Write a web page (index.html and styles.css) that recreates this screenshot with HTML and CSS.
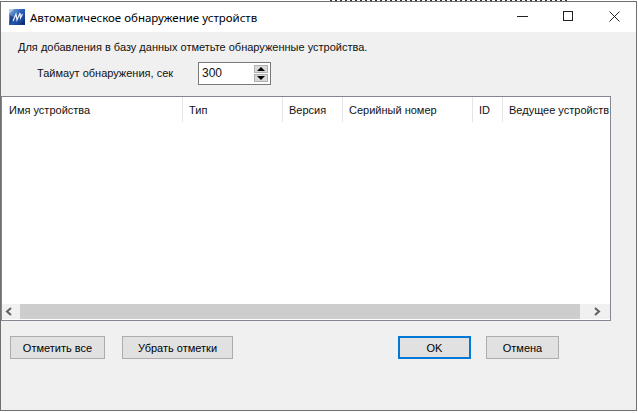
FILE: index.html
```html
<!DOCTYPE html>
<html lang="ru">
<head>
<meta charset="utf-8">
<title>Автоматическое обнаружение устройств</title>
<link rel="stylesheet" href="styles.css">
</head>
<body>
<div class="backdrop"></div>
<div class="window">
  <header class="titlebar">
    <svg class="app-icon" width="16" height="16" viewBox="0 0 16 16">
      <defs>
        <linearGradient id="ig" x1="0" y1="0" x2="1" y2="1">
          <stop offset="0" stop-color="#8fb0dc"/>
          <stop offset="0.45" stop-color="#2a62b8"/>
          <stop offset="1" stop-color="#0f2f80"/>
        </linearGradient>
      </defs>
      <rect width="16" height="16" fill="url(#ig)"/>
      <path d="M1 15 L6 9 L1 6 Z M11 15 L16 10 V15 Z" fill="#0b2468" opacity=".55"/>
      <path d="M4 12 L7 5 L8 11 L11 4 L11.5 9 L13.5 5" fill="none" stroke="#eef2fa" stroke-width="1.2"/>
      <path d="M0 0 H5 L0 5 Z" fill="#dfe8f6" opacity=".6"/>
    </svg>
    <span class="title">Автоматическое обнаружение устройств</span>
    <div class="controls">
      <svg class="ctl" width="11" height="11" viewBox="0 0 11 11"><path d="M0 5.5 H11" stroke="#222" fill="none"/></svg>
      <svg class="ctl" width="11" height="11" viewBox="0 0 11 11"><rect x=".5" y=".5" width="9" height="9" stroke="#222" fill="none"/></svg>
      <svg class="ctl" width="11" height="11" viewBox="0 0 11 11"><path d="M.5 .5 L10.5 10.5 M10.5 .5 L.5 10.5" stroke="#222" fill="none"/></svg>
    </div>
  </header>
  <main class="body">
    <p class="intro">Для добавления в базу данных отметьте обнаруженные устройства.</p>
    <div class="timeout">
      <label class="timeout-label">Таймаут обнаружения, сек</label>
      <div class="spin">
        <span class="spin-value">300</span>
        <div class="spin-btns">
          <span class="spin-btn"><i class="tri-up"></i></span>
          <span class="spin-btn"><i class="tri-down"></i></span>
        </div>
      </div>
    </div>
    <section class="list">
      <div class="head">
        <div class="col c1">Имя устройства</div>
        <div class="col c2">Тип</div>
        <div class="col c3">Версия</div>
        <div class="col c4">Серийный номер</div>
        <div class="col c5">ID</div>
        <div class="col c6">Ведущее устройств</div>
      </div>
      <div class="rows"></div>
      <div class="hscroll">
        <span class="arrow"><svg width="8" height="9" viewBox="0 0 8 9"><path d="M6 1 L2 4.5 L6 8" fill="none" stroke="#606060" stroke-width="2"/></svg></span>
        <span class="thumb"></span>
        <span class="arrow arrow-r"><svg width="8" height="9" viewBox="0 0 8 9"><path d="M2 1 L6 4.5 L2 8" fill="none" stroke="#606060" stroke-width="2"/></svg></span>
      </div>
    </section>
    <div class="actions">
      <button class="btn b-all">Отметить все</button>
      <button class="btn b-clear">Убрать отметки</button>
      <button class="btn btn-default b-ok">OK</button>
      <button class="btn b-cancel">Отмена</button>
    </div>
  </main>
</div>
</body>
</html>
```
FILE: styles.css
```css
* { box-sizing: border-box; }
html, body { margin: 0; padding: 0; background: #fff; }
body {
  width: 638px;
  height: 413px;
  overflow: hidden;
  font-family: "Liberation Sans", Arial, sans-serif;
  font-size: 11px;
  color: #111;
}
.backdrop {
  height: 1px;
  margin-left: 330px;
  width: 240px;
  background: repeating-linear-gradient(90deg, #333 0 2px, #fff 2px 5px);
}
.window {
  width: 637px;
  height: 410px;
  border: 1px solid #707070;
  display: flex;
  flex-direction: column;
  background: #f0f0f0;
}
.titlebar {
  height: 30px;
  flex: none;
  background: #fff;
  display: flex;
  align-items: center;
  padding-left: 8px;
}
.app-icon { flex: none; }
.title {
  margin-left: 5px;
  font-family: "Noto Sans", sans-serif;
  font-size: 11.5px;
  color: #000;
}
.controls {
  margin-left: auto;
  margin-right: 16px;
  display: flex;
  gap: 35px;
  margin-top: -2px;
}
.body { flex: 1; display: flex; flex-direction: column; }
.intro { margin: 8px 0 0 17px; height: 14px; line-height: 14px; }
.timeout {
  display: flex;
  align-items: center;
  margin-top: 8px;
  margin-left: 36px;
  height: 23px;
}
.timeout-label { width: 161px; padding-bottom: 2px; }
.spin {
  width: 73px;
  height: 23px;
  border: 1px solid #7a7a7a;
  background: #fff;
  display: flex;
  align-items: center;
  justify-content: space-between;
  padding: 0 2px 0 3px;
}
.spin-value { font-size: 12px; padding-bottom: 2px; }
.spin-btns { display: flex; flex-direction: column; gap: 1px; }
.spin-btn {
  width: 14px;
  height: 8px;
  background: #d9d9d9;
  border: 1px solid #b0b0b0;
  display: flex;
  align-items: center;
  justify-content: center;
}
.tri-up, .tri-down {
  width: 0; height: 0;
  border-left: 4px solid transparent;
  border-right: 4px solid transparent;
}
.tri-up { border-bottom: 4px solid #000; }
.tri-down { border-top: 4px solid #000; }
.list {
  margin-top: 11px;
  width: 610px;
  height: 225px;
  background: #fff;
  border: 1px solid #828790;
  display: flex;
  flex-direction: column;
}
.head { display: flex; height: 25px; flex: none; }
.col {
  flex: none;
  padding: 7px 0 0 7px;
  border-right: 1px solid #e5e5e5;
  overflow: hidden;
  white-space: nowrap;
}
.c1 { width: 181px; }
.c2 { width: 100px; padding-left: 6px; }
.c3 { width: 60px; padding-left: 6px; }
.c4 { width: 130px; padding-left: 6px; }
.c5 { width: 30px; padding-left: 6px; }
.c6 { width: 107px; padding-left: 6px; border-right: 0; }
.rows { flex: 1; }
.hscroll {
  flex: none;
  height: 15px;
  margin-bottom: 1px;
  display: flex;
  background: #f0f0f0;
}
.arrow {
  width: 18px;
  flex: none;
  display: flex;
  align-items: center;
  justify-content: center;
  padding-right: 4px;
}
.arrow-r { width: 30px; padding-right: 0; padding-left: 4px; }
.thumb { flex: 1; background: #cdcdcd; }
.actions {
  display: flex;
  margin-top: 15px;
  padding-left: 9px;
  height: 23px;
}
.btn {
  font: inherit;
  color: #000;
  height: 23px;
  background: #e1e1e1;
  border: 1px solid #adadad;
  padding: 0;
}
.btn-default { border: 2px solid #0078d7; }
.b-all { width: 95px; }
.b-clear { width: 111px; margin-left: 17px; }
.b-ok { width: 73px; margin-left: 165px; }
.b-cancel { width: 73px; margin-left: 15px; }
```
